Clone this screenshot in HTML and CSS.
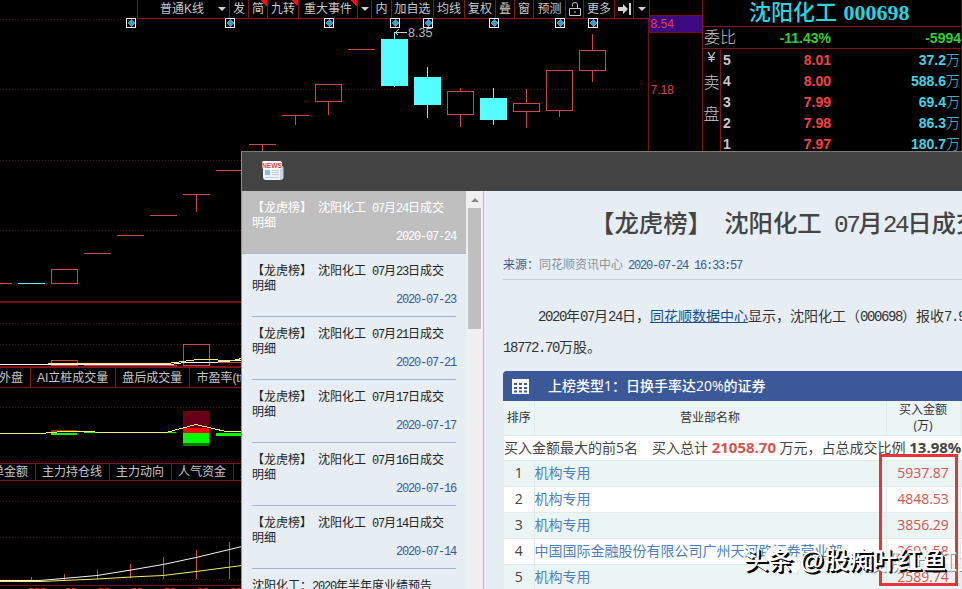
FILE: index.html
```html
<!DOCTYPE html>
<html lang="zh-CN">

<head>
    <meta charset="UTF-8">
    <title>沈阳化工 000698</title>
    <link rel="stylesheet" href="styles.css">
</head>

<body>
    <div class="terminal">
        <div class="charts">
            <div class="toolbar">
                <span class="tool kline">普通K线<i class="caret"></i></span>
                <span class="tool w19">发</span>
                <span class="tool w19 hot">简</span>
                <span class="tool w31 hot">九转</span>
                <span class="tool w59 hot">重大事件</span>
                <span class="tool w14"><i class="caret"></i></span>
                <span class="tool w20">内</span>
                <span class="tool w42">加自选</span>
                <span class="tool w31">均线</span>
                <span class="tool w31">复权</span>
                <span class="tool w19">叠</span>
                <span class="tool w19">窗</span>
                <span class="tool w32">预测</span>
                <span class="tool w18">
                    <svg width="12" height="14" viewBox="0 0 12 14" fill="none" stroke="#c8c8c8">
                        <path d="M.5 6.5h11v7H.5zM3.500 4.500V2.500q0-2 2.500-2t2.500 2v4M6 9v2" />
                    </svg>
                </span>
                <span class="tool w31">更多</span>
                <span class="tool w19">
                    <svg width="13" height="12" viewBox="0 0 13 12" fill="#d4d4d4">
                        <path d="M0 4h5V1l5 5-5 5V8H0zM11 0h2v12h-2z" />
                    </svg>
                </span>
                <span class="tool w16"><i class="caret"></i></span>
            </div>

            <svg class="chart" width="702" height="348" viewBox="0 19 702 348" shape-rendering="crispEdges">
                <g class="grid">
                    <path d="M0 19.500H126M0 89.500H648M0 160.500H648M0 230.500H648M0 323.500H648M0 344.500H648" />
                </g>
                <path class="frame" d="M648.500 19V367M0 301.500H648M0 302.500H648" />

                <!-- event markers -->
                <g class="markers">
                    <path class="box" d="M126.500 18.500h9v9h-9zM225.500 18.500h9v9h-9zM324.500 18.500h9v9h-9zM390.500 18.500h9v9h-9zM423.500 18.500h9v9h-9zM489.500 18.500h9v9h-9zM555.500 18.500h9v9h-9zM588.500 18.500h9v9h-9z" />
                    <path class="dot" d="M131 19l4 4-4 4-4-4zM230 19l4 4-4 4-4-4zM329 19l4 4-4 4-4-4zM395 19l4 4-4 4-4-4zM428 19l4 4-4 4-4-4zM494 19l4 4-4 4-4-4zM560 19l4 4-4 4-4-4zM593 19l4 4-4 4-4-4z" />
                </g>

                <!-- rising candles -->
                <path class="up" d="M0 283.500H12M51.500 269.500h26v14h-26zM84 253.500h27M117 235.500h27M150 215.500h27M183 194.500h27M196.500 194v18M216 170.500h27M249 144.500h27M262.500 144v10M282 115.500h27M295.500 115v10M315.500 84.500h26v17h-26zM328.500 102v13M348 49.500h27M447.500 91.500h26v23h-26zM460.500 88v3M460.500 115v12M513.500 103.500h26v8h-26zM526.500 89v14M526.500 112v16M546.500 70.500h26v40h-26zM559.500 111v6M579.500 50.500h26v20h-26zM592.500 34v16M592.500 71v11" />
                <!-- falling candles -->
                <path class="down" d="M18 283h27v1H18zM381 39h27v47h-27zM394 32h1v55h-1zM414 77h27v28h-27zM427 67h1v51h-1zM480 98h27v22h-27zM493 88h1v37h-1z" />

                <path class="arrow" d="M395 32.500h12M395.500 32.500l3-3M395.500 32.500l3 3" />
                <text class="peak" x="408" y="37">8.35</text>

                <!-- volume -->
                <path class="up" d="M51.500 360.500h26v5h-26zM183.500 344.500h26v21h-26zM216 362.500h26M84 365.500h93" />
                <path class="ma-white" d="M0 364.500H170L185 362.500H212L242 360" />
                <path class="ma-yellow" d="M48 363.500H167L198 359.500H212L230 361L242 358.500" />
                <path class="frame" d="M0 366.500H702" />

                <rect class="price-tag" x="649" y="15" width="53" height="17" />
                <text class="price" x="650.500" y="28">8.54</text>
                <text class="price" x="650.500" y="94">7.18</text>
            </svg>

            <div class="tabs">
                <span class="first">外盘</span>
                <span>AI立桩成交量</span>
                <span>盘后成交量</span>
                <span>市盈率(ttm)</span>
            </div>

            <svg class="chart" width="702" height="75" viewBox="0 388 702 75" shape-rendering="crispEdges">
                <path class="grid" d="M0 407.500H702M0 461.500H702" />
                <path fill="#660018" d="M183 411h26v17h-26z" />
                <path fill="#a03000" d="M51 430h26v2H51z" />
                <path fill="#f00" d="M183 428h26v5h-26z" />
                <path fill="#0f0" d="M183 433h26v10h-26zM216 433h26v3h-26zM51 433h26v2H51zM18 433h26v1H18zM84 432h92v1H84z" />
                <path fill="#067a06" d="M183 443h26v3h-26z" />
                <path class="ma-yellow" d="M0 433.500L36 434L62 431.500H80L110 432.500H166L196 424.500L228 432L242 431" />
            </svg>

            <div class="tabs low">
                <span class="first">单金额</span>
                <span>主力持仓线</span>
                <span>主力动向</span>
                <span>人气资金</span>
                <span>大单</span>
            </div>

            <svg class="chart" width="702" height="108" viewBox="0 481 702 108">
                <path class="grid" d="M0 501.500H702M0 537.500H702M0 579.500H702" />
                <path class="up" d="M31.500 577v3M64.500 574v6M97.500 570v9M130.500 564v14M163.500 557v22M196.500 550v29M229.500 542v37" />
                <path class="ma-white" d="M0 580.500H40L97 575.500L131 570L163 564.500L196 557.500L242 546.500" />
                <path class="ma-yellow" d="M0 581.500H40L97 579L131 577L163 575.500L196 571.500L242 565.500" />
                <path class="frame" d="M0 585.500H702" />
                <path class="axis" d="M29 588.500h16M66 588.500h12M99 588.500h12M132 588.500h12M165 588.500h12M198 588.500h12M231 588.500h10" />
            </svg>
        </div>

        <div class="quote">
            <h1>沈阳化工 <b>000698</b></h1>
            <div class="ratio">
                <span class="label">委比</span>
                <span>-11.43%</span>
                <span>-5994</span>
            </div>
            <div class="book">
                <div class="side"><span>¥</span><span>卖</span><span>盘</span></div>
                <div class="levels">
                    <div class="level"><b>5</b><span>8.01</span><em>37.2<i>万</i></em></div>
                    <div class="level"><b>4</b><span>8.00</span><em>588.6<i>万</i></em></div>
                    <div class="level"><b>3</b><span>7.99</span><em>69.4<i>万</i></em></div>
                    <div class="level"><b>2</b><span>7.98</span><em>86.3<i>万</i></em></div>
                    <div class="level"><b>1</b><span>7.97</span><em>180.7<i>万</i></em></div>
                </div>
            </div>
        </div>
    </div>

    <div class="news-window">
        <div class="news-header">
            <svg width="22" height="20" viewBox="0 0 22 20">
                <path fill="#c9d3dc" d="M5 5h15q1.500 0 1.500 2v9q0 3-3 3H5z" />
                <path fill="#f1f4f6" d="M1 7h17v12H4q-3 0-3-3z" />
                <rect fill="#fff" x="0" y="0" width="20" height="8" rx="2" />
                <rect fill="#7fbfe8" x="3" y="9" width="5" height="5" />
                <path stroke="#c4cdd5" d="M10 9.500h7M10 11.500h7M10 13.500h7M3 16.500h14" />
                <text x="0" y="6.800" textLength="20" lengthAdjust="spacingAndGlyphs">NEWS</text>
            </svg>
        </div>
        <div class="news-body">
            <ul class="news-list">
                <li class="active">
                    <p>【龙虎榜】<i class="n"> </i>沈阳化工<i class="n"> 07</i>月<i class="n">24</i>日成交明细</p>
                    <time class="n">2020-07-24</time>
                </li>
                <li>
                    <p>【龙虎榜】<i class="n"> </i>沈阳化工<i class="n"> 07</i>月<i class="n">23</i>日成交明细</p>
                    <time class="n">2020-07-23</time>
                </li>
                <li>
                    <p>【龙虎榜】<i class="n"> </i>沈阳化工<i class="n"> 07</i>月<i class="n">21</i>日成交明细</p>
                    <time class="n">2020-07-21</time>
                </li>
                <li>
                    <p>【龙虎榜】<i class="n"> </i>沈阳化工<i class="n"> 07</i>月<i class="n">17</i>日成交明细</p>
                    <time class="n">2020-07-17</time>
                </li>
                <li>
                    <p>【龙虎榜】<i class="n"> </i>沈阳化工<i class="n"> 07</i>月<i class="n">16</i>日成交明细</p>
                    <time class="n">2020-07-16</time>
                </li>
                <li>
                    <p>【龙虎榜】<i class="n"> </i>沈阳化工<i class="n"> 07</i>月<i class="n">14</i>日成交明细</p>
                    <time class="n">2020-07-14</time>
                </li>
                <li>
                    <p>沈阳化工：<i class="n">2020</i>年半年度业绩预告</p>
                </li>
            </ul>
            <div class="scrollbar">
                <i class="arrow-up"></i>
                <div class="thumb"></div>
            </div>
            <div class="article">
                <h2>【龙虎榜】<i class="n"> </i>沈阳化工<i class="n"> 07</i>月<i class="n">24</i>日成交明细</h2>
                <div class="source">来源：<span>同花顺资讯中心</span><time class="n">2020-07-24 16:33:57</time></div>
                <p class="text"><i class="n">2020</i>年<i class="n">07</i>月<i class="n">24</i>日，<a href="#">同花顺数据中心</a>显示，沈阳化工（<i class="n">000698</i>）报收<i class="n">7.97</i>元<br><i class="n">18772.70</i>万股。</p>

                <div class="table-title">
                    <svg width="17" height="15" viewBox="0 0 17 15" fill="#fff">
                        <path fill-rule="evenodd" d="M0 0h17v15H0zM2 4v2h3V4zM7 4v2h3V4zM12 4v2h3V4zM2 8v2h3V8zM7 8v2h3V8zM12 8v2h3V8zM2 11.500v2h3v-2zM7 11.500v2h3v-2zM12 11.500v2h3v-2z" />
                    </svg>
                    上榜类型1：日换手率达20%的证券
                </div>
                <table>
                    <thead>
                        <tr>
                            <th class="rank">排序</th>
                            <th class="name">营业部名称</th>
                            <th class="amount">买入金额<br>(万)</th>
                            <th></th>
                        </tr>
                    </thead>
                    <tbody>
                        <tr class="summary">
                            <td colspan="4">买入金额最大的前5名<span class="gap"></span>买入总计 <b class="red">21058.70</b> 万元，占总成交比例 <b>13.98%</b></td>
                        </tr>
                        <tr class="tint"><td>1</td><td>机构专用</td><td>5937.87</td><td></td></tr>
                        <tr><td>2</td><td>机构专用</td><td>4848.53</td><td></td></tr>
                        <tr class="tint"><td>3</td><td>机构专用</td><td>3856.29</td><td></td></tr>
                        <tr><td>4</td><td>中国国际金融股份有限公司广州天河路证券营业部</td><td>2691.58</td><td></td></tr>
                        <tr class="tint"><td>5</td><td>机构专用</td><td>2589.74</td><td></td></tr>
                    </tbody>
                </table>
            </div>
        </div>
    </div>

    <div class="highlight"></div>
    <div class="watermark back">
        <svg width="38" height="34" viewBox="0 0 38 34">
            <path fill="#fff" stroke="#ccd4d4" stroke-width=".6" d="M14 1C6 1 1 6 1 12q0 5 5 9l-1 4 5-3q4 1 8 0-1-9 9-12Q24 1 14 1z" />
            <path fill="#fff" stroke="#ccd4d4" stroke-width=".6" d="M26 11c-7 0-11 4-11 9s4 9 11 9q2 0 4-1l4 2-1-3q4-3 4-7c0-5-4-9-11-9z" />
            <path fill="#aab4b4" d="M9 7h2v2H9zM17 7h2v2h-2zM22 16h2v2h-2zM29 16h2v2h-2z" />
        </svg>
        股痴叶红鱼
    </div>
    <div class="watermark front">头条 @股痴叶红鱼</div>
</body>

</html>
```

FILE: styles.css
```css
:root {
    --line: #8c1018;
    --panel: #e6eef4;
    --blue: #3b5998;
    --link: #4a7fc4;
}

* {
    box-sizing: border-box;
}

body {
    width: 962px;
    height: 589px;
    margin: 0;
    overflow: hidden;
    position: relative;
    background: #000;
    color: #c8c8c8;
    font: 12px/1 "Liberation Sans", "Noto Sans CJK SC", sans-serif;
}

i,
em {
    font-style: normal;
}

/* half-width digits */
.n {
    font-family: "Liberation Mono", monospace;
    letter-spacing: -0.1em;
    white-space: pre;
}

/* trading terminal */
.terminal {
    display: grid;
    grid-template-columns: 702px 260px;
    height: 589px;
}

.charts {
    display: flex;
    flex-direction: column;
    overflow: hidden;
}

.toolbar {
    display: flex;
    width: 512px;
    height: 19px;
    margin-left: 137px;
    flex: none;
    border-left: 1px solid var(--line);
    border-bottom: 1px solid #a01018;
}

.tool {
    display: flex;
    align-items: center;
    justify-content: center;
    flex: none;
    border-right: 1px solid var(--line);
    white-space: nowrap;
}

.kline {
    width: 92px;
    justify-content: flex-end;
    gap: 14px;
    padding-right: 3px;
}

.hot {
    background: linear-gradient(45deg, transparent 50%, #f01010 50%) top right / 6px 6px no-repeat;
}

.caret {
    border: 4px solid transparent;
    border-top-color: #d0d0d0;
    border-bottom: 0;
}

.w14 { width: 14px; }
.w16 { width: 16px; }
.w18 { width: 18px; }
.w19 { width: 19px; }
.w20 { width: 20px; }
.w31 { width: 31px; }
.w32 { width: 32px; }
.w42 { width: 42px; }
.w59 { width: 59px; }

.chart {
    display: block;
    flex: none;
    overflow: visible;
}

.chart path {
    fill: none;
}

.grid,
.grid path {
    stroke: #4a1414;
    stroke-dasharray: 1 2;
}

.frame {
    stroke: #7a0c12;
}

.chart .box {
    fill: #000;
    stroke: #f4f4f4;
}

.chart .dot {
    fill: #389ccc;
}

.up {
    stroke: #d2444a;
}

.chart .down {
    fill: #54fefe;
}

.chart path[fill="#660018"] { fill: #660018; }
.chart path[fill="#a03000"] { fill: #a03000; }
.chart path[fill="#f00"] { fill: #f00; }
.chart path[fill="#0f0"] { fill: #0f0; }
.chart path[fill="#067a06"] { fill: #067a06; }

.arrow {
    stroke: #d0d0d0;
}

.peak {
    fill: #b8b8b8;
    font-size: 12.5px;
}

.ma-white {
    stroke: #f4f4f4;
}

.ma-yellow {
    stroke: #f0f060;
}

.axis {
    stroke: #d02020;
    stroke-dasharray: 4 2;
}

.price-tag {
    fill: #3c0a80;
    stroke: #7a0c12;
}

.price {
    fill: #e04048;
    font-size: 12px;
}

.tabs {
    display: flex;
    height: 21px;
    flex: none;
    border-top: 1px solid var(--line);
    border-bottom: 1px solid var(--line);
}

.tabs.low {
    height: 18px;
}

.tabs span {
    display: flex;
    align-items: center;
    padding: 0 7px 0 6px;
    border-right: 1px solid var(--line);
    white-space: nowrap;
}

.tabs .first {
    padding-left: 0;
    margin-left: -1px;
}

.tabs.low .first {
    margin-left: -8px;
}

/* order book */
.quote {
    border-left: 1px solid var(--line);
    border-right: 1px solid #501010;
}

.quote h1 {
    height: 27px;
    margin: 0;
    padding-left: 46px;
    border-bottom: 1px solid var(--line);
    color: #22d6e2;
    font: 500 22px/25px "Liberation Serif", "Noto Sans CJK SC", serif;
    white-space: nowrap;
    word-spacing: 1px;
}

.ratio {
    display: grid;
    grid-template-columns: 40px 88px 1fr;
    align-items: center;
    height: 22px;
    border-bottom: 1px solid var(--line);
    color: #30d030;
    font-size: 14px;
    font-weight: bold;
    text-align: right;
}

.ratio .label {
    padding-left: 1px;
    color: #c8c8c8;
    font-size: 16px;
    font-weight: 300;
    text-align: left;
}

.book {
    display: flex;
}

.side {
    display: flex;
    flex-direction: column;
    gap: 16px;
    width: 18px;
    padding-top: 1px;
    border-right: 1px solid var(--line);
    font-size: 16px;
    font-weight: 300;
    text-align: center;
}

.side span:first-child {
    margin-bottom: -5px;
    font-size: 14px;
}

.levels {
    flex: 1;
}

.level {
    display: grid;
    grid-template-columns: 20px 90px 1fr;
    align-items: center;
    height: 21px;
    padding-left: 2px;
    font-size: 14px;
    font-weight: bold;
}

.level span {
    color: #f84040;
    text-align: right;
    padding-right: 2px;
}

.level em {
    padding-right: 1px;
    color: #40d4e4;
    text-align: right;
}

.level em i {
    font-weight: 300;
}

/* news window */
.news-window {
    position: absolute;
    left: 241px;
    top: 151px;
    width: 721px;
    height: 438px;
    overflow: hidden;
    border-top: 1px solid #7c7c7c;
    border-left: 1px solid #8c9298;
    background: var(--panel);
    color: #333;
}

.news-header {
    height: 39px;
    padding: 9px 20px;
    background: #434343;
}

.news-header text {
    fill: #d84a3c;
    font-size: 7.5px;
    font-weight: bold;
}

.news-body {
    display: flex;
    height: 398px;
}

.news-list {
    width: 224px;
    height: 398px;
    margin: 0;
    padding: 0;
    flex: none;
    list-style: none;
}

.news-list li {
    height: 63px;
    margin: 0 10px;
    padding-top: 10px;
    border-bottom: 1px solid #a3b4d3;
    color: #222;
    line-height: 14px;
}

.news-list li.active {
    margin: 0;
    padding: 10px 10px 0;
    background: #bfbfbf;
    color: #fff;
}

.news-list p {
    margin: 0;
    word-break: break-all;
}

.news-list time {
    display: block;
    color: var(--blue);
    text-align: right;
}

.news-list .active time {
    color: #fff;
}

.scrollbar {
    display: flex;
    flex-direction: column;
    align-items: center;
    gap: 6px;
    width: 18px;
    padding-top: 7px;
    flex: none;
    border-right: 1px solid #b8bcc0;
    background: #f0f0f0;
}

.arrow-up {
    border: 4px solid transparent;
    border-bottom-color: #858585;
    border-top: 0;
}

.thumb {
    width: 13px;
    height: 121px;
    background: #bfbfbf;
}

.article {
    flex: none;
    width: 700px;
    padding-left: 19px;
}

.article h2 {
    height: 62px;
    margin: 0;
    padding-left: 87px;
    color: #444;
    font-size: 24.4px;
    font-weight: 500;
    line-height: 65px;
    white-space: nowrap;
}

.source {
    height: 27px;
    border-bottom: 1px solid #c9d0d6;
    color: var(--blue);
    line-height: 24px;
}

.source span {
    margin-right: 5px;
    color: #8c9298;
}

.text {
    height: 91px;
    margin: 0;
    padding-top: 21px;
    font-size: 14px;
    line-height: 30px;
    text-indent: 35px;
    white-space: nowrap;
}

.text a {
    color: #15508c;
}

.table-title {
    display: flex;
    align-items: center;
    gap: 19px;
    height: 30px;
    padding-left: 9px;
    border-radius: 4px 4px 0 0;
    background: var(--blue);
    color: #fff;
    font: 500 14px/1 "Open Sans", "Noto Sans CJK SC", sans-serif;
}

table {
    width: 700px;
    margin-left: 1px;
    table-layout: fixed;
    border-collapse: collapse;
    background: #fff;
    font: 14px/1 "Open Sans", "Noto Sans CJK SC", sans-serif;
}

th,
td {
    padding: 0;
    border-right: 1px solid #dfeaea;
    border-bottom: 1px solid #e2ebeb;
    white-space: nowrap;
}

th {
    height: 34px;
    background: #ebf5f4;
    font-size: 12px;
    font-weight: 400;
    line-height: 16px;
}

.rank {
    width: 30px;
}

.name {
    width: 352px;
}

.amount {
    width: 74px;
}

td {
    height: 26px;
    color: var(--link);
}

td:first-child {
    color: #444;
    text-align: center;
}

td:nth-child(3) {
    color: #d9534f;
    text-align: center;
}

.tint {
    background: #ebf5f4;
}

.summary td:first-child {
    height: 25px;
    text-align: left;
}

.gap {
    display: inline-block;
    width: 14px;
}

.summary b {
    font-size: 15px;
}

.red {
    color: #d9534f;
}

/* overlays */
.highlight {
    position: absolute;
    left: 879px;
    top: 454px;
    width: 79px;
    height: 132px;
    border: 3px solid #e83438;
}

.watermark {
    position: absolute;
    display: flex;
    align-items: center;
    color: #fff;
    font-size: 24.4px;
    white-space: pre;
}

.watermark.back {
    left: 764px;
    top: 527px;
    gap: 9px;
    font-size: 23.5px;
    text-shadow: 1px 1px 0 #8a9090;
}

.watermark.front {
    left: 744px;
    top: 549px;
    font-weight: 500;
    text-shadow: 1px 1px 0 #000, 2px 2px 0 #000;
}
```
